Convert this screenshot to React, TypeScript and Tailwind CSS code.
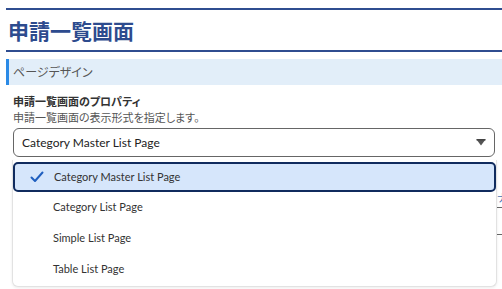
import React from 'react';

const jp = { fontFamily: '"Noto Sans CJK JP", "Noto Sans", sans-serif' };
const latin = { fontFamily: 'Lato, "Noto Sans", sans-serif' };

const options = ['Category Master List Page', 'Category List Page', 'Simple List Page', 'Table List Page'];

const CheckIcon: React.FC = () => (
  <svg width="14" height="12" viewBox="0 0 14 12" fill="none">
    <path d="M1.5 6.5 L5 10 L12.5 1.5" stroke="#1f5fbf" strokeWidth="2" strokeLinecap="round" strokeLinejoin="round" />
  </svg>
);

const Caret: React.FC = () => (
  <svg width="10" height="7" viewBox="0 0 10 7">
    <path d="M0.5 0.5 H9.5 L5 6.5 Z" fill="#555" />
    <rect x="0.5" y="0" width="9" height="1.5" fill="#444" />
  </svg>
);

export default function App() {
  return (
    <div className="w-[502px] h-[289px] overflow-hidden bg-white pl-[6px] pt-[8px] [font-feature-settings:'palt']" style={jp}>
      {/* Page heading */}
      <div className="border-t-2 border-b-2 border-[#2f4d90] h-[44px] flex items-center pl-[2px]">
        <h1 className="text-[21px] font-bold leading-none text-[#2d4b8e]">申請一覧画面</h1>
      </div>

      {/* Section header */}
      <div className="mt-[7px] h-[26px] bg-[#e2eef9] border-l-[3px] border-[#2b8ae6] flex items-center pl-[4px]">
        <span className="text-[12px] text-[#555]">ページデザイン</span>
      </div>

      <div className="pl-[7px] pt-[9px]">
        <div className="text-[11px] font-semibold leading-[14px] text-[#333]">申請一覧画面のプロパティ</div>
        <div className="text-[11px] leading-[14px] mt-[2px] text-[#555]">申請一覧画面の表示形式を指定します。</div>

        <div className="relative mt-[4px]">
          <div className="w-[482px] h-[29px] border border-[#666] rounded-[6px] flex items-center justify-between px-[8px]">
            <span className="text-[12px] text-[#222]" style={latin}>Category Master List Page</span>
            <Caret />
          </div>

          {/* Content hidden behind the open list */}
          <div className="mt-[33px] text-[11px] text-[#4a6fb0] pl-[484px] leading-[14px]">ナ</div>
          <div className="mt-[3px] border-b border-[#666] ml-[300px] w-[200px]" />
          <div className="mt-[26px] border-b border-[#666] ml-[300px] w-[200px]" />

          {/* Open dropdown list */}
          <div className="absolute left-[-1px] top-[32px] w-[485px] bg-white rounded-b-[6px] border border-t-0 border-[#e2e2e2] shadow-[0_1px_3px_rgba(0,0,0,0.08)] pt-[2px] pb-[1px]" style={latin}>
            {options.map((opt, i) =>
              i === 0 ? (
                <div key={opt} className="h-[30px] bg-[#d6e6fb] border-2 border-[#102b5e] rounded-[5px] flex items-center pl-[15px]">
                  <CheckIcon />
                  <span className="ml-[10px] text-[11px] text-[#333]">{opt}</span>
                </div>
              ) : (
                <div key={opt} className="h-[31px] flex items-center pl-[40px]">
                  <span className="text-[11px] text-[#333]">{opt}</span>
                </div>
              )
            )}
          </div>
        </div>
      </div>
    </div>
  );
}
